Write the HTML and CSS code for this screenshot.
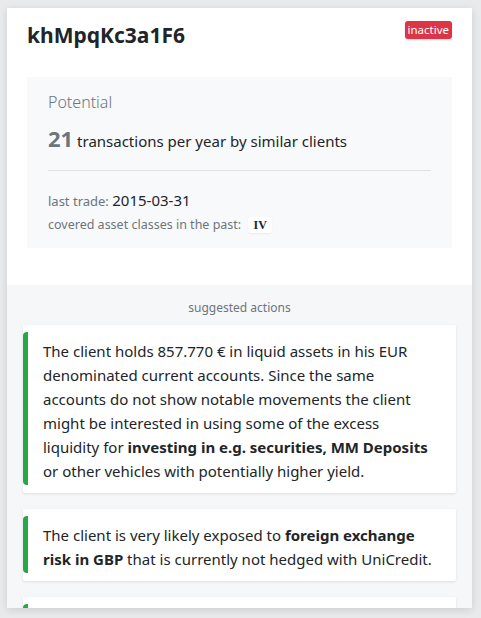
FILE: index.html
```html
<!DOCTYPE html>
<html>
<head>
<meta charset="utf-8">
<link rel="stylesheet" href="styles.css">
</head>
<body>
<div class="card">
  <div class="head">
    <div class="title-row">
      <h1 class="title">khMpqKc3a1F6</h1>
      <span class="status">inactive</span>
    </div>
    <div class="potential">
      <div class="pot-label">Potential</div>
      <div class="pot-main"><span class="pot-num">21</span> transactions per year by similar clients</div>
      <hr class="divider">
      <div class="meta"><span class="meta-label">last trade:</span> <span class="meta-value">2015-03-31</span></div>
      <div class="meta meta-classes"><span class="meta-label">covered asset classes in the past:</span> <span class="asset">IV</span></div>
    </div>
  </div>
  <div class="actions">
    <div class="actions-label">suggested actions</div>
    <div class="action">The client holds 857.770 € in liquid assets in his EUR denominated current accounts. Since the same accounts do not show notable movements the client might be interested in using some of the excess liquidity for <b>investing in e.g. securities, MM Deposits</b> or other vehicles with potentially higher yield.</div>
    <div class="action">The client is very likely exposed to <b>foreign exchange risk in GBP</b> that is currently not hedged with UniCredit.</div>
    <div class="action">The client might benefit from additional services.</div>
  </div>
</div>
</body>
</html>
```
FILE: styles.css
```css
html, body {
  margin: 0;
  padding: 0;
  height: 100%;
  overflow: hidden;
}
body {
  background: #e9eaec;
  font-family: "Noto Sans", "Open Sans", sans-serif;
  color: #212529;
  padding: 8px 9px 10px 7px;
  box-sizing: border-box;
}
.card {
  background: #fff;
  height: 600px;
  overflow: hidden;
  box-shadow: 0 2px 8px rgba(0,0,0,0.12);
}
.head {
  padding: 10px 20px 37px 20px;
}
.title-row {
  display: flex;
  justify-content: space-between;
  align-items: flex-start;
}
.title {
  margin: 0;
  font-size: 21px;
  line-height: 34px;
  font-weight: 700;
  color: #212529;
}
.status {
  margin-top: 3px;
  background: #dc3545;
  color: #fff;
  font-size: 11.5px;
  line-height: 18px;
  padding: 0 3px;
  border-radius: 3px;
  box-shadow: 0 1px 2px rgba(0,0,0,0.15);
}
.potential {
  margin-top: 25px;
  background: #f8f9fa;
  padding: 14px 21px 12px 21px;
}
.pot-label {
  font-size: 16px;
  font-weight: 300;
  color: #6c757d;
  line-height: 22px;
}
.pot-main {
  margin-top: 11px;
  font-size: 15px;
  line-height: 28px;
  color: #212529;
}
.pot-num {
  font-size: 22px;
  font-weight: 700;
  color: #6c757d;
}
.divider {
  border: 0;
  border-top: 1px solid #dee2e6;
  margin: 15px 0 18px 0;
}
.meta {
  font-size: 13px;
  color: #6c757d;
  line-height: 22px;
}
.meta-value {
  font-size: 15px;
  color: #212529;
}
.meta-classes {
  margin-top: 2px;
  font-size: 12.5px;
}
.asset {
  display: inline-block;
  background: #fff;
  color: #212529;
  font-family: "Liberation Serif", serif;
  font-weight: 700;
  font-size: 12px;
  line-height: 16px;
  padding: 0 5px;
  margin-left: 4px;
  border-radius: 3px;
  box-shadow: 0 1px 2px rgba(0,0,0,0.06);
}
.actions {
  background: #f6f7f9;
  padding: 0 16px 20px 16px;
  display: flex;
  flex-direction: column;
  gap: 16px;
}
.actions-label {
  text-align: center;
  font-size: 12px;
  color: #6c757d;
  padding-top: 14px;
  line-height: 18px;
  margin-bottom: -8px;
}
.action {
  position: relative;
  background: #fff;
  font-size: 15px;
  line-height: 24px;
  padding: 14px 20px 10px 20px;
  box-shadow: 0 1px 3px rgba(0,0,0,0.1);
  border-radius: 2px;
}
.action::before {
  content: "";
  position: absolute;
  left: 0;
  top: 7px;
  bottom: 8px;
  width: 5px;
  background: #28a745;
  border-radius: 4px 0 0 4px;
}
.action b {
  font-weight: 700;
}
```
